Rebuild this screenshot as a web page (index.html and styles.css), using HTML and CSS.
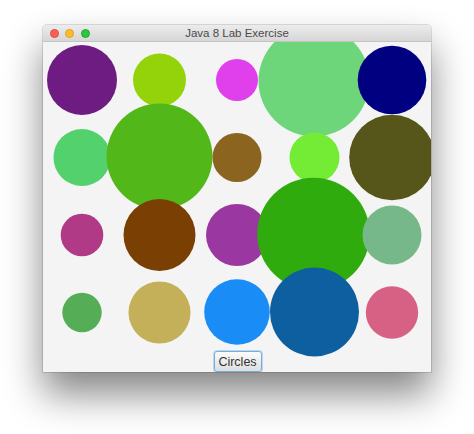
FILE: index.html
```html
<!DOCTYPE html>
<html>
<head>
<meta charset="utf-8">
<link rel="stylesheet" href="styles.css">
</head>
<body>
<div class="window">
  <div class="titlebar">
    <div class="lights">
      <span class="light red"></span>
      <span class="light yellow"></span>
      <span class="light green"></span>
    </div>
    <div class="title">Java 8 Lab Exercise</div>
  </div>
  <svg class="canvas" width="388" height="309" viewBox="0 0 388 309">
    <circle cx="39" cy="38" r="35" fill="#6f1c82"/>
    <circle cx="116.5" cy="38" r="26.5" fill="#94d30a"/>
    <circle cx="194" cy="38" r="21" fill="#e040ec"/>
    <circle cx="271" cy="39" r="55.5" fill="#6dd57a"/>
    <circle cx="349" cy="38" r="34.3" fill="#000080"/>

    <circle cx="39" cy="115.5" r="28.5" fill="#52d16d"/>
    <circle cx="116.5" cy="114.5" r="53" fill="#52b81a"/>
    <circle cx="194" cy="115.5" r="24.5" fill="#8b6420"/>
    <circle cx="271.5" cy="115.5" r="25" fill="#74ec35"/>
    <circle cx="349" cy="115.5" r="42.8" fill="#56561a"/>

    <circle cx="39" cy="193" r="21.3" fill="#b03a85"/>
    <circle cx="116.5" cy="193" r="36" fill="#7a3f02"/>
    <circle cx="194" cy="193" r="31" fill="#9b37a0"/>
    <circle cx="270.5" cy="192" r="56.3" fill="#2fab0d"/>
    <circle cx="349" cy="193" r="29.5" fill="#77b88b"/>

    <circle cx="39" cy="270.5" r="19.7" fill="#55ae56"/>
    <circle cx="116.5" cy="270.5" r="31" fill="#c5b05a"/>
    <circle cx="194" cy="270" r="32.8" fill="#1a8cf5"/>
    <circle cx="271.5" cy="270" r="44.5" fill="#0d5fa0"/>
    <circle cx="349" cy="270.5" r="26.2" fill="#d66185"/>
  </svg>
  <div class="footer">
    <button class="btn">Circles</button>
  </div>
</div>
</body>
</html>
```

FILE: styles.css
```css
html, body {
  margin: 0;
  padding: 0;
  background: #ffffff;
}
body {
  min-height: 434px;
  box-sizing: border-box;
  padding: 25px 0 0 43px;
  font-family: "Liberation Sans", Arial, sans-serif;
}
.window {
  width: 388px;
  background: #f4f4f4;
  border-radius: 4px 4px 0 0;
  box-shadow: 0 0 0 1px rgba(0,0,0,0.12), 0 22px 38px rgba(0,0,0,0.48);
  overflow: hidden;
  display: flex;
  flex-direction: column;
}
.titlebar {
  height: 17px;
  background: linear-gradient(#ececec, #d6d6d6);
  border-bottom: 1px solid #c4c4c4;
  box-sizing: border-box;
  display: flex;
  align-items: center;
  position: relative;
  z-index: 2;
}
.lights {
  display: flex;
  gap: 6.5px;
  padding-left: 6.5px;
  position: relative;
  z-index: 1;
}
.light {
  width: 9px;
  height: 9px;
  border-radius: 50%;
  box-sizing: border-box;
}
.red { background: #fc5f57; border: 0.5px solid #de4a41; }
.yellow { background: #fdbc2e; border: 0.5px solid #de9f22; }
.green { background: #2ac840; border: 0.5px solid #1ea930; }
.title {
  position: absolute;
  left: 0;
  right: 0;
  top: 0;
  bottom: 0;
  display: flex;
  align-items: center;
  justify-content: center;
  font-size: 11.5px;
  color: #4a4a4a;
}
.canvas {
  display: block;
  width: 388px;
  height: 309px;
  overflow: visible;
  position: relative;
  z-index: 1;
}
.footer {
  height: 21px;
  display: flex;
  justify-content: center;
  position: relative;
  z-index: 1;
}
.btn {
  width: 48px;
  height: 21px;
  margin-left: 1px;
  padding: 0;
  font-family: "Liberation Sans", Arial, sans-serif;
  font-size: 12.5px;
  color: #333333;
  background: linear-gradient(#fbfbfb, #dedede);
  border: 1px solid #6fb0df;
  border-radius: 3px;
  box-shadow: 0 0 0 1px rgba(120,180,230,0.45);
}
```
